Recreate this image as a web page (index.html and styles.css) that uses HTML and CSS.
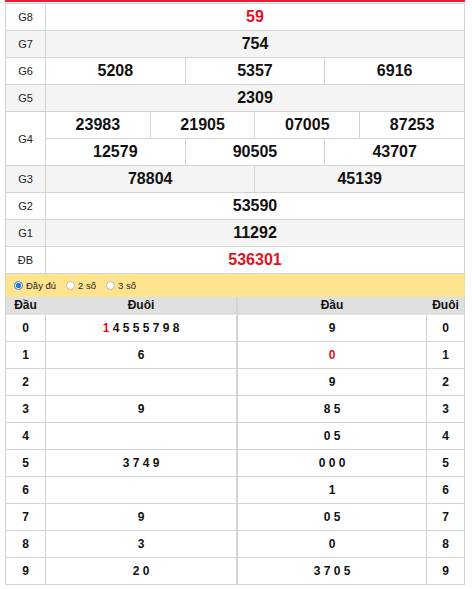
FILE: index.html
```html
<!DOCTYPE html>
<html lang="vi">
<head>
<meta charset="utf-8">
<title>Kết quả xổ số</title>
<link rel="stylesheet" href="styles.css">
</head>
<body>
<div class="wrap">
  <table class="kq">
    <colgroup>
      <col class="c-lbl">
      <col><col><col><col><col><col><col><col><col><col><col><col>
    </colgroup>
    <tr><td class="lbl">G8</td><td colspan="12" class="num red">59</td></tr>
    <tr class="alt"><td class="lbl">G7</td><td colspan="12" class="num">754</td></tr>
    <tr><td class="lbl">G6</td><td colspan="4" class="num">5208</td><td colspan="4" class="num">5357</td><td colspan="4" class="num">6916</td></tr>
    <tr class="alt"><td class="lbl">G5</td><td colspan="12" class="num">2309</td></tr>
    <tr><td class="lbl" rowspan="2">G4</td><td colspan="3" class="num">23983</td><td colspan="3" class="num">21905</td><td colspan="3" class="num">07005</td><td colspan="3" class="num">87253</td></tr>
    <tr><td colspan="4" class="num">12579</td><td colspan="4" class="num">90505</td><td colspan="4" class="num">43707</td></tr>
    <tr class="alt"><td class="lbl">G3</td><td colspan="6" class="num">78804</td><td colspan="6" class="num">45139</td></tr>
    <tr><td class="lbl">G2</td><td colspan="12" class="num">53590</td></tr>
    <tr class="alt"><td class="lbl">G1</td><td colspan="12" class="num">11292</td></tr>
    <tr><td class="lbl">ĐB</td><td colspan="12" class="num red">536301</td></tr>
  </table>
  <div class="opts">
    <label class="opt"><span class="radio on"></span>Đầy đủ</label>
    <label class="opt"><span class="radio"></span>2 số</label>
    <label class="opt"><span class="radio"></span>3 số</label>
  </div>
  <div class="loto">
    <table class="lt lt-left">
      <colgroup><col class="c-dau"><col></colgroup>
      <tr class="hd"><th>Đầu</th><th>Đuôi</th></tr>
      <tr><td>0</td><td><span class="red">1</span> 4 5 5 5 7 9 8</td></tr>
      <tr><td>1</td><td>6</td></tr>
      <tr><td>2</td><td></td></tr>
      <tr><td>3</td><td>9</td></tr>
      <tr><td>4</td><td></td></tr>
      <tr><td>5</td><td>3 7 4 9</td></tr>
      <tr><td>6</td><td></td></tr>
      <tr><td>7</td><td>9</td></tr>
      <tr><td>8</td><td>3</td></tr>
      <tr><td>9</td><td>2 0</td></tr>
    </table>
    <table class="lt lt-right">
      <colgroup><col><col class="c-duoi"></colgroup>
      <tr class="hd"><th>Đầu</th><th>Đuôi</th></tr>
      <tr><td>9</td><td>0</td></tr>
      <tr><td><span class="red">0</span></td><td>1</td></tr>
      <tr><td>9</td><td>2</td></tr>
      <tr><td>8 5</td><td>3</td></tr>
      <tr><td>0 5</td><td>4</td></tr>
      <tr><td>0 0 0</td><td>5</td></tr>
      <tr><td>1</td><td>6</td></tr>
      <tr><td>0 5</td><td>7</td></tr>
      <tr><td>0</td><td>8</td></tr>
      <tr><td>3 7 0 5</td><td>9</td></tr>
    </table>
  </div>
</div>
</body>
</html>
```
FILE: styles.css
```css
* { box-sizing: border-box; }
html, body { margin: 0; padding: 0; background: #fff; }
body {
  font-family: "Liberation Sans", Arial, sans-serif;
  color: #111;
}
.wrap {
  width: 460px;
  margin-left: 5px;
  border-top: 2px solid #e8202f;
  padding-top: 1px;
}
.kq {
  width: 460px;
  border-collapse: collapse;
  table-layout: fixed;
}
.c-lbl { width: 40px; }
.kq td {
  border: 1px solid #d4d4d4;
  height: 27px;
  padding: 0;
  text-align: center;
  vertical-align: middle;
}
.kq tr.alt td { background: #f4f4f4; }
.kq td.lbl {
  font-size: 11px;
  color: #222;
}
.kq td.num {
  font-size: 16px;
  font-weight: bold;
  color: #111;
}
.red { color: #e5101f !important; }

.opts {
  height: 23px;
  background: #ffe490;
  border-left: 1px solid #f3dc8c;
  border-right: 1px solid #f3dc8c;
  display: flex;
  align-items: center;
  padding-left: 8px;
  gap: 10px;
  font-size: 9.5px;
  color: #222;
}
.opt { display: flex; align-items: center; gap: 3px; }
.radio {
  width: 9px;
  height: 9px;
  border-radius: 50%;
  border: 1px solid #b9b9b9;
  background: #fff;
  display: inline-block;
}
.radio.on {
  border: 1px solid #2f79d6;
  background: radial-gradient(circle, #2f79d6 0 2.5px, #fff 3px);
}

.loto {
  display: flex;
}
.lt {
  border-collapse: collapse;
  table-layout: fixed;
}
.lt-left { width: 232px; }
.lt-right { width: 228px; }
.c-dau { width: 40px; }
.c-duoi { width: 38px; }
.lt th {
  background: #e0e0e0;
  height: 17px;
  padding: 0;
  font-size: 12px;
  font-weight: bold;
  color: #111;
  text-align: center;
  border: 1px solid #e0e0e0;
  border-top: 0;
}
.lt-left th:first-child { border-left: 1px solid #d4d4d4; }
.lt-right th:last-child { border-right: 1px solid #d4d4d4; }
.lt-left th:last-child { border-right: 1px solid #d4d4d4; }
.lt-right th:first-child { border-left: 1px solid #d4d4d4; }
.lt td {
  border: 1px solid #d4d4d4;
  height: 27px;
  padding: 0;
  text-align: center;
  vertical-align: middle;
  font-size: 12px;
  font-weight: bold;
  color: #111;
}
```
